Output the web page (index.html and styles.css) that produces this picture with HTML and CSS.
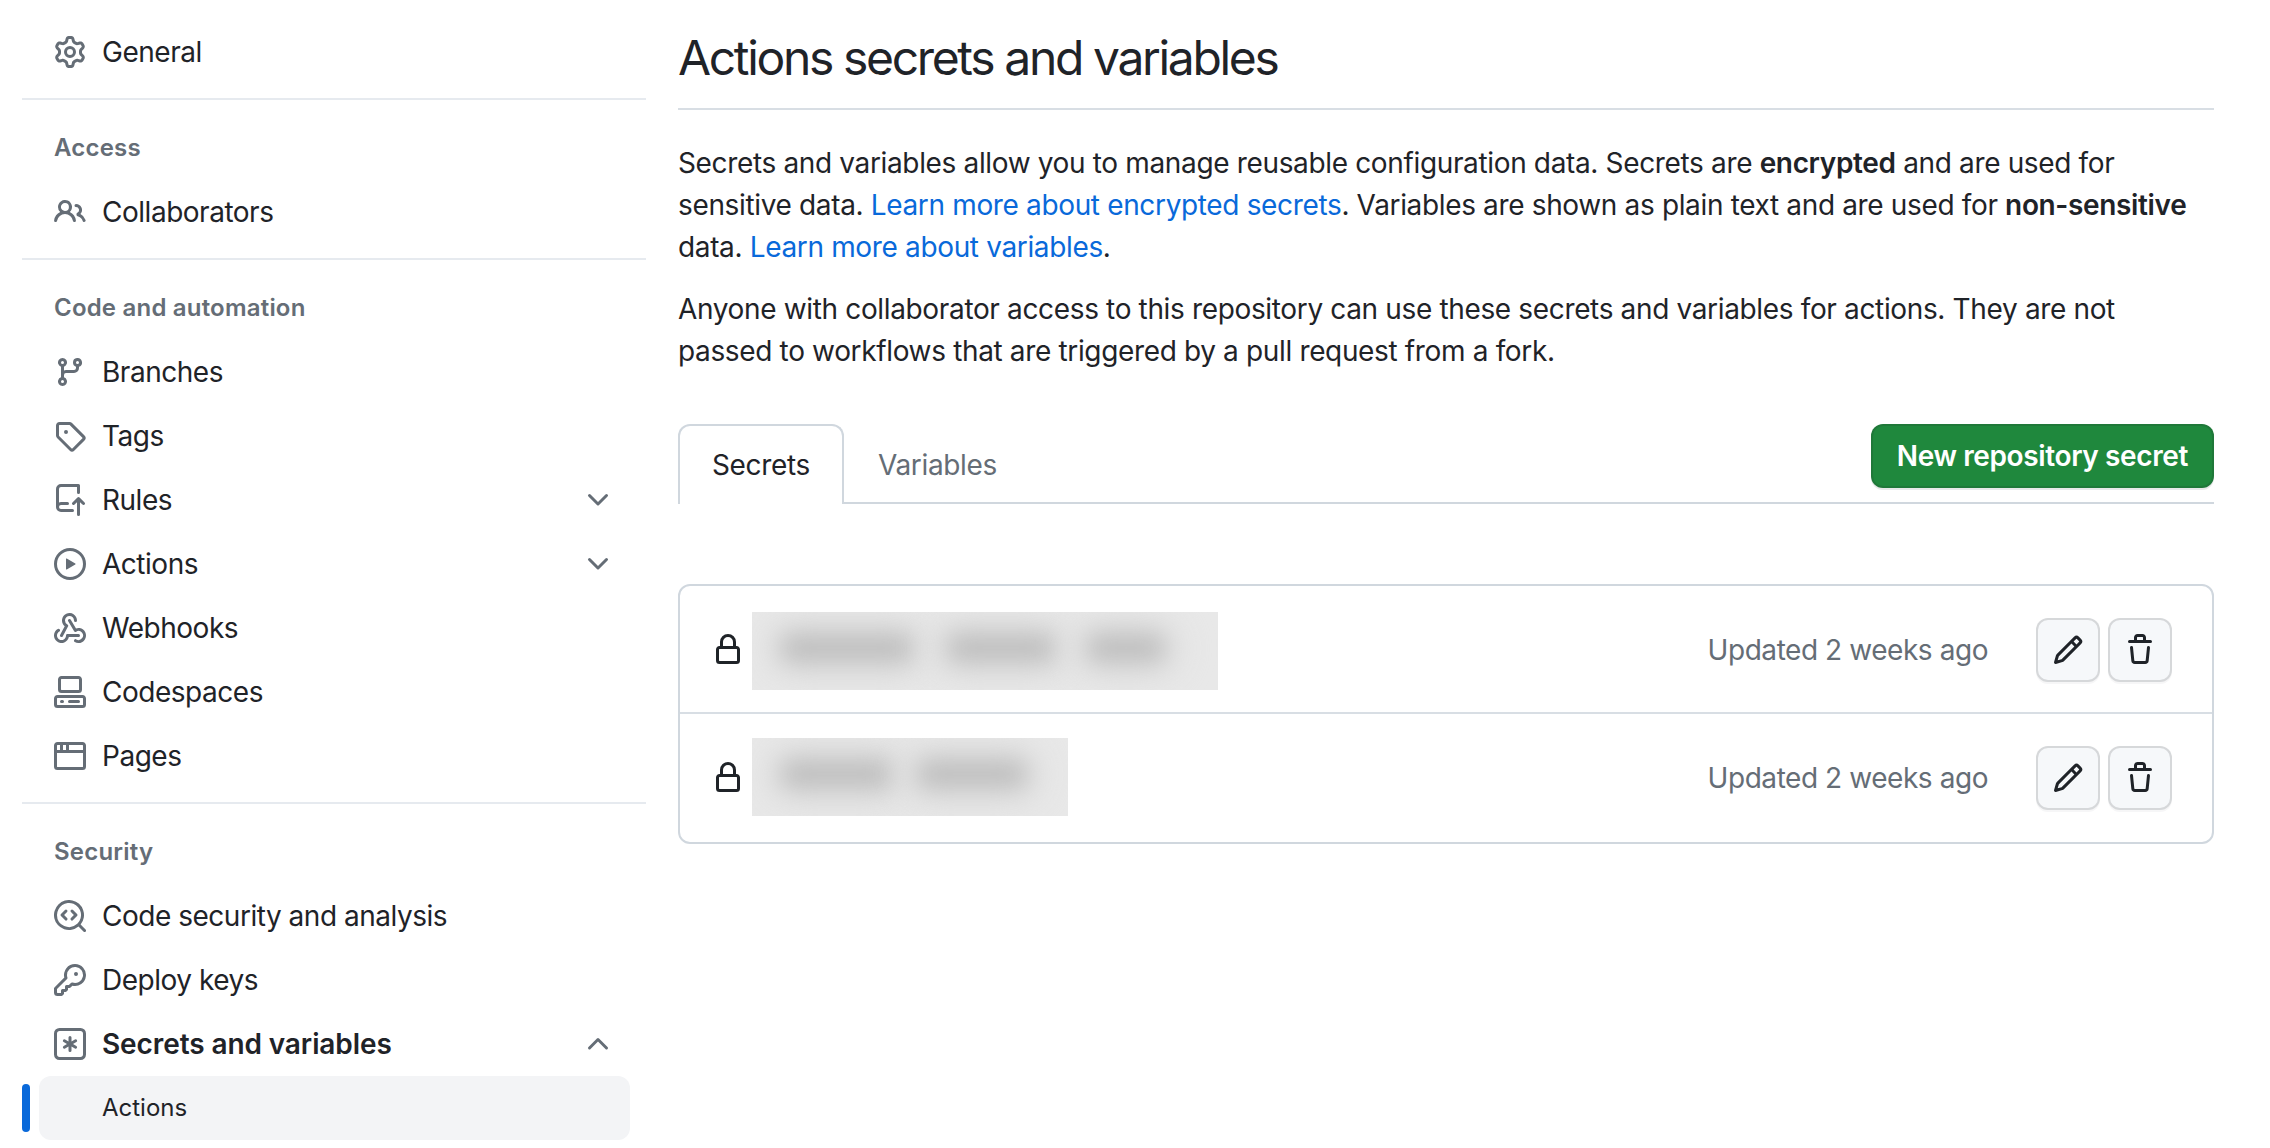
FILE: index.html
```html
<!DOCTYPE html>
<html lang="en">
<head>
<meta charset="utf-8">
<title>Actions secrets and variables</title>
<link rel="stylesheet" href="styles.css">
</head>
<body>
<svg class="sprite" width="0" height="0" aria-hidden="true">
<defs>
<symbol id="i-gear" viewBox="0 0 16 16"><path d="M8 0a8.2 8.2 0 0 1 .701.031C9.444.095 9.99.645 10.16 1.29l.288 1.107c.018.066.079.158.212.224.231.114.454.243.668.386.123.082.233.09.299.071l1.103-.303c.644-.176 1.392.021 1.82.63.27.385.506.792.704 1.218.315.675.111 1.422-.364 1.891l-.814.806c-.049.048-.098.147-.088.294.016.257.016.515 0 .772-.01.147.038.246.088.294l.814.806c.475.469.679 1.216.364 1.891a7.977 7.977 0 0 1-.704 1.217c-.428.61-1.176.807-1.82.63l-1.102-.302c-.067-.019-.177-.011-.3.071a5.909 5.909 0 0 1-.668.386c-.133.066-.194.158-.211.224l-.29 1.106c-.168.646-.715 1.196-1.458 1.26a8.006 8.006 0 0 1-1.402 0c-.743-.064-1.289-.614-1.458-1.26l-.289-1.106c-.018-.066-.079-.158-.212-.224a5.738 5.738 0 0 1-.668-.386c-.123-.082-.233-.09-.299-.071l-1.103.303c-.644.176-1.392-.021-1.82-.63a8.12 8.12 0 0 1-.704-1.218c-.315-.675-.111-1.422.363-1.891l.815-.806c.05-.048.098-.147.088-.294a6.214 6.214 0 0 1 0-.772c.01-.147-.038-.246-.088-.294l-.815-.806C.635 6.045.431 5.298.746 4.623a7.92 7.92 0 0 1 .704-1.217c.428-.61 1.176-.807 1.82-.63l1.102.302c.067.019.177.011.3-.071.214-.143.437-.272.668-.386.133-.066.194-.158.211-.224l.29-1.106C6.009.645 6.556.095 7.299.03 7.53.01 7.764 0 8 0Zm-.571 1.525c-.036.003-.108.036-.137.146l-.289 1.105c-.147.561-.549.967-.998 1.189-.173.086-.34.183-.5.29-.417.278-.97.423-1.529.27l-1.103-.303c-.109-.03-.175.016-.195.045-.22.312-.412.644-.573.99-.014.031-.021.11.059.19l.815.806c.411.406.562.957.53 1.456a4.709 4.709 0 0 0 0 .582c.032.499-.119 1.05-.53 1.456l-.815.806c-.081.08-.073.159-.059.19.162.346.353.677.573.989.02.03.085.076.195.046l1.102-.303c.56-.153 1.113-.008 1.53.27.161.107.328.204.501.29.447.222.85.629.997 1.189l.289 1.105c.029.109.101.143.137.146a6.6 6.6 0 0 0 1.142 0c.036-.003.108-.036.137-.146l.289-1.105c.147-.561.549-.967.998-1.189.173-.086.34-.183.5-.29.417-.278.97-.423 1.529-.27l1.103.303c.109.029.175-.016.195-.045.22-.313.411-.644.573-.99.014-.031.021-.11-.059-.19l-.815-.806c-.411-.406-.562-.957-.53-1.456a4.709 4.709 0 0 0 0-.582c-.032-.499.119-1.05.53-1.456l.815-.806c.081-.08.073-.159.059-.19a6.464 6.464 0 0 0-.573-.989c-.02-.03-.085-.076-.195-.046l-1.102.303c-.56.153-1.113.008-1.53-.27a4.44 4.44 0 0 0-.501-.29c-.447-.222-.85-.629-.997-1.189l-.289-1.105c-.029-.11-.101-.143-.137-.146a6.6 6.6 0 0 0-1.142 0ZM11 8a3 3 0 1 1-6 0 3 3 0 0 1 6 0ZM9.5 8a1.5 1.5 0 1 0-3.001.001A1.5 1.5 0 0 0 9.5 8Z"/></symbol>
<symbol id="i-people" viewBox="0 0 16 16"><path d="M2 5.5a3.5 3.5 0 1 1 5.898 2.549 5.508 5.508 0 0 1 3.034 4.084.75.75 0 1 1-1.482.235 4 4 0 0 0-7.9 0 .75.75 0 0 1-1.482-.236A5.507 5.507 0 0 1 3.102 8.05 3.493 3.493 0 0 1 2 5.5ZM11 4a3.001 3.001 0 0 1 2.22 5.018 5.01 5.01 0 0 1 2.56 3.012.749.749 0 0 1-.885.954.752.752 0 0 1-.549-.514 3.507 3.507 0 0 0-2.522-2.372.75.75 0 0 1-.574-.73v-.352a.75.75 0 0 1 .416-.672A1.5 1.5 0 0 0 11 5.5.75.75 0 0 1 11 4Zm-5.5-.5a2 2 0 1 0-.001 3.999A2 2 0 0 0 5.5 3.5Z"/></symbol>
<symbol id="i-branch" viewBox="0 0 16 16"><path d="M9.5 3.25a2.25 2.25 0 1 1 3 2.122V6A2.5 2.5 0 0 1 10 8.5H6a1 1 0 0 0-1 1v1.128a2.251 2.251 0 1 1-1.5 0V5.372a2.25 2.25 0 1 1 1.5 0v1.836A2.493 2.493 0 0 1 6 7h4a1 1 0 0 0 1-1v-.628A2.25 2.25 0 0 1 9.5 3.25Zm-6 0a.75.75 0 1 0 1.5 0 .75.75 0 0 0-1.5 0Zm8.25-.75a.75.75 0 1 0 0 1.5.75.75 0 0 0 0-1.5ZM4.25 12a.75.75 0 1 0 0 1.5.75.75 0 0 0 0-1.5Z"/></symbol>
<symbol id="i-tag" viewBox="0 0 16 16"><path d="M1 7.775V2.75C1 1.784 1.784 1 2.75 1h5.025c.464 0 .91.184 1.238.513l6.25 6.25a1.75 1.75 0 0 1 0 2.474l-5.026 5.026a1.75 1.75 0 0 1-2.474 0l-6.25-6.25A1.752 1.752 0 0 1 1 7.775Zm1.5 0c0 .066.026.13.073.177l6.25 6.25a.25.25 0 0 0 .354 0l5.025-5.025a.25.25 0 0 0 0-.354l-6.25-6.25a.25.25 0 0 0-.177-.073H2.75a.25.25 0 0 0-.25.25ZM6 5a1 1 0 1 1 0 2 1 1 0 0 1 0-2Z"/></symbol>
<symbol id="i-rules" viewBox="0 0 16 16"><path d="M1 2.5A2.5 2.5 0 0 1 3.5 0h8.75a.75.75 0 0 1 .75.75v3.5a.75.75 0 0 1-1.5 0V1.5h-8a1 1 0 0 0-1 1v6.708A2.493 2.493 0 0 1 3.5 9h3.25a.75.75 0 0 1 0 1.5H3.5a1 1 0 0 0 0 2h5.75a.75.75 0 0 1 0 1.5H3.5A2.5 2.5 0 0 1 1 11.5Zm13.23 7.79h-.001l-1.224-1.224v6.184a.75.75 0 0 1-1.5 0V9.066L10.28 10.29a.75.75 0 0 1-1.06-1.061l2.505-2.504a.75.75 0 0 1 1.06 0L15.29 9.23a.751.751 0 0 1-.018 1.042.751.751 0 0 1-1.042.018Z"/></symbol>
<symbol id="i-play" viewBox="0 0 16 16"><path d="M8 0a8 8 0 1 1 0 16A8 8 0 0 1 8 0ZM1.5 8a6.5 6.5 0 1 0 13 0 6.5 6.5 0 0 0-13 0Zm4.879-2.773 4.264 2.559a.25.25 0 0 1 0 .428l-4.264 2.559A.25.25 0 0 1 6 10.559V5.442a.25.25 0 0 1 .379-.215Z"/></symbol>
<symbol id="i-webhook" viewBox="0 0 16 16"><path d="M5.5 4.25a2.25 2.25 0 0 1 4.5 0 .75.75 0 0 0 1.5 0 3.75 3.75 0 1 0-6.14 2.889l-2.272 4.258a.75.75 0 0 0 1.324.706L7 7.25a.75.75 0 0 0-.307-1.015A2.25 2.25 0 0 1 5.5 4.25Z"/><path d="M7.364 3.607a.75.75 0 0 1 1.03.257l2.608 4.349a3.75 3.75 0 1 1-.628 6.785.75.75 0 0 1 .752-1.299 2.25 2.25 0 1 0-.033-3.88.75.75 0 0 1-1.03-.256L7.107 4.636a.75.75 0 0 1 .257-1.03Z"/><path d="M2.9 8.776A.75.75 0 0 1 2.625 9.8 2.25 2.25 0 1 0 6 11.75a.75.75 0 0 1 .75-.751h5.5a.75.75 0 0 1 0 1.5H7.425a3.751 3.751 0 1 1-5.55-3.998.75.75 0 0 1 1.024.274Z"/></symbol>
<symbol id="i-codespaces" viewBox="0 0 16 16"><path d="M0 11.25c0-.966.784-1.75 1.75-1.75h12.5c.966 0 1.75.784 1.75 1.75v3A1.75 1.75 0 0 1 14.25 16H1.75A1.75 1.75 0 0 1 0 14.25Zm2-9.5C2 .784 2.784 0 3.75 0h8.5C13.216 0 14 .784 14 1.75v5a1.75 1.75 0 0 1-1.75 1.75h-8.5A1.75 1.75 0 0 1 2 6.75Zm1.75-.25a.25.25 0 0 0-.25.25v5c0 .138.112.25.25.25h8.5a.25.25 0 0 0 .25-.25v-5a.25.25 0 0 0-.25-.25Zm-2 9.5a.25.25 0 0 0-.25.25v3c0 .138.112.25.25.25h12.5a.25.25 0 0 0 .25-.25v-3a.25.25 0 0 0-.25-.25Z"/><path d="M7 12.75a.75.75 0 0 1 .75-.75h4.5a.75.75 0 0 1 0 1.5h-4.5a.75.75 0 0 1-.75-.75Zm-4 0a.75.75 0 0 1 .75-.75h.5a.75.75 0 0 1 0 1.5h-.5a.75.75 0 0 1-.75-.75Z"/></symbol>
<symbol id="i-browser" viewBox="0 0 16 16"><path fill-rule="evenodd" d="M0 2.75C0 1.784.784 1 1.75 1h12.5c.966 0 1.75.784 1.75 1.75v10.5A1.75 1.75 0 0 1 14.25 15H1.75A1.75 1.75 0 0 1 0 13.25ZM1.5 6.5h13v6.75a.25.25 0 0 1-.25.25H1.75a.25.25 0 0 1-.25-.25ZM1.5 2.75a.25.25 0 0 1 .25-.25H3V5H1.5ZM4.5 2.5H6V5H4.5ZM7.5 2.5h6.75a.25.25 0 0 1 .25.25V5H7.5Z"/></symbol>
<symbol id="i-codescan" viewBox="0 0 16 16"><path d="M8.47 4.97a.75.75 0 0 0 0 1.06L9.94 7.5 8.47 8.97a.75.75 0 1 0 1.06 1.06l2-2a.75.75 0 0 0 0-1.06l-2-2a.75.75 0 0 0-1.06 0ZM6.53 6.03a.75.75 0 0 0-1.06-1.06l-2 2a.75.75 0 0 0 0 1.06l2 2a.75.75 0 1 0 1.06-1.06L5.06 7.5l1.47-1.47Z"/><path d="M12.246 13.307a7.501 7.501 0 1 1 1.06-1.06l2.474 2.473a.749.749 0 0 1-.326 1.275.749.749 0 0 1-.734-.215ZM1.5 7.5a6.002 6.002 0 0 0 3.608 5.504 6.002 6.002 0 0 0 6.486-1.117.748.748 0 0 1 .292-.293A6 6 0 1 0 1.5 7.5Z"/></symbol>
<symbol id="i-key" viewBox="0 0 16 16"><path d="M10.5 0a5.499 5.499 0 1 1-1.288 10.848l-.932.932a.749.749 0 0 1-.53.22H7v.75a.749.749 0 0 1-.22.53l-.5.5a.749.749 0 0 1-.53.22H5v.75a.749.749 0 0 1-.22.53l-.5.5a.749.749 0 0 1-.53.22h-2A1.75 1.75 0 0 1 0 14.25v-2c0-.199.079-.389.22-.53l4.932-4.932A5.5 5.5 0 0 1 10.5 0Zm-4 5.5c-.001.431.069.86.205 1.269a.75.75 0 0 1-.181.768L1.5 12.56v1.69c0 .138.112.25.25.25h1.69l.06-.06v-1.19a.75.75 0 0 1 .75-.75h1.19l.06-.06v-1.19a.75.75 0 0 1 .75-.75h1.19l1.023-1.025a.75.75 0 0 1 .768-.18A4 4 0 1 0 6.5 5.5ZM11 6a1 1 0 1 1 0-2 1 1 0 0 1 0 2Z"/></symbol>
<symbol id="i-asterisk" viewBox="0 0 16 16"><path d="M0 2.75A2.75 2.75 0 0 1 2.75 0h10.5A2.75 2.75 0 0 1 16 2.75v10.5A2.75 2.75 0 0 1 13.25 16H2.75A2.75 2.75 0 0 1 0 13.25ZM2.75 1.5c-.69 0-1.25.56-1.25 1.25v10.5c0 .69.56 1.25 1.25 1.25h10.5c.69 0 1.25-.56 1.25-1.25V2.75c0-.69-.56-1.25-1.25-1.25Z"/><path d="M8 4a.75.75 0 0 1 .75.75V6.7l1.69-.975a.75.75 0 0 1 .75 1.3L9.5 8l1.69.976a.75.75 0 0 1-.75 1.298L8.75 9.3v1.951a.75.75 0 0 1-1.5 0V9.299l-1.69.976a.75.75 0 0 1-.75-1.3L6.5 8l-1.69-.975a.75.75 0 0 1 .75-1.3l1.69.976V4.75A.75.75 0 0 1 8 4Z"/></symbol>
<symbol id="i-down" viewBox="0 0 16 16"><path d="M12.78 5.22a.749.749 0 0 1 0 1.06l-4.25 4.25a.749.749 0 0 1-1.06 0L3.22 6.28a.749.749 0 1 1 1.06-1.06L8 8.939l3.72-3.719a.749.749 0 0 1 1.06 0Z"/></symbol>
<symbol id="i-up" viewBox="0 0 16 16"><path d="M3.22 10.53a.749.749 0 0 1 0-1.06l4.25-4.25a.749.749 0 0 1 1.06 0l4.25 4.25a.749.749 0 1 1-1.06 1.06L8 6.811 4.28 10.53a.749.749 0 0 1-1.06 0Z"/></symbol>
<symbol id="i-lock" viewBox="0 0 16 16"><path d="M4 4a4 4 0 0 1 8 0v2h.25c.966 0 1.75.784 1.75 1.75v5.5A1.75 1.75 0 0 1 12.25 15h-8.5A1.75 1.75 0 0 1 2 13.25v-5.5C2 6.784 2.784 6 3.75 6H4Zm8.25 3.5h-8.5a.25.25 0 0 0-.25.25v5.5c0 .138.112.25.25.25h8.5a.25.25 0 0 0 .25-.25v-5.5a.25.25 0 0 0-.25-.25ZM10.5 6V4a2.5 2.5 0 1 0-5 0v2Z"/></symbol>
<symbol id="i-pencil" viewBox="0 0 16 16"><path d="M11.013 1.427a1.75 1.75 0 0 1 2.474 0l1.086 1.086a1.75 1.75 0 0 1 0 2.474l-8.61 8.61c-.21.21-.47.364-.756.445l-3.251.93a.75.75 0 0 1-.927-.928l.929-3.25c.081-.286.235-.547.445-.758l8.61-8.61Zm.176 4.823L9.75 4.81l-6.286 6.287a.253.253 0 0 0-.064.108l-.558 1.953 1.953-.558a.253.253 0 0 0 .108-.064Zm1.238-3.763a.25.25 0 0 0-.354 0L10.811 3.75l1.439 1.44 1.263-1.263a.25.25 0 0 0 0-.354Z"/></symbol>
<symbol id="i-trash" viewBox="0 0 16 16"><path d="M11 1.75V3h2.25a.75.75 0 0 1 0 1.5H2.75a.75.75 0 0 1 0-1.5H5V1.75C5 .784 5.784 0 6.75 0h2.5C10.216 0 11 .784 11 1.75ZM4.496 6.675l.66 6.6a.25.25 0 0 0 .249.225h5.19a.25.25 0 0 0 .249-.225l.66-6.6a.75.75 0 0 1 1.492.149l-.66 6.6A1.748 1.748 0 0 1 10.595 15h-5.19a1.75 1.75 0 0 1-1.741-1.575l-.66-6.6a.75.75 0 1 1 1.492-.15ZM6.5 1.75V3h3V1.75a.25.25 0 0 0-.25-.25h-2.5a.25.25 0 0 0-.25.25Z"/></symbol>
</defs>
</svg>
<div class="layout">
<nav class="sidebar">
  <a class="row"><svg class="icon"><use href="#i-gear"/></svg><span>General</span></a>
  <hr class="sep">
  <h2 class="group">Access</h2>
  <a class="row"><svg class="icon"><use href="#i-people"/></svg><span>Collaborators</span></a>
  <hr class="sep">
  <h2 class="group">Code and automation</h2>
  <a class="row"><svg class="icon"><use href="#i-branch"/></svg><span>Branches</span></a>
  <a class="row"><svg class="icon"><use href="#i-tag"/></svg><span>Tags</span></a>
  <a class="row"><svg class="icon"><use href="#i-rules"/></svg><span>Rules</span><svg class="chev"><use href="#i-down"/></svg></a>
  <a class="row"><svg class="icon"><use href="#i-play"/></svg><span>Actions</span><svg class="chev"><use href="#i-down"/></svg></a>
  <a class="row"><svg class="icon"><use href="#i-webhook"/></svg><span>Webhooks</span></a>
  <a class="row"><svg class="icon"><use href="#i-codespaces"/></svg><span>Codespaces</span></a>
  <a class="row"><svg class="icon"><use href="#i-browser"/></svg><span>Pages</span></a>
  <hr class="sep">
  <h2 class="group">Security</h2>
  <a class="row"><svg class="icon"><use href="#i-codescan"/></svg><span>Code security and analysis</span></a>
  <a class="row"><svg class="icon"><use href="#i-key"/></svg><span>Deploy keys</span></a>
  <a class="row row-open"><svg class="icon"><use href="#i-asterisk"/></svg><span>Secrets and variables</span><svg class="chev"><use href="#i-up"/></svg></a>
  <div class="subrow"><i class="marker"></i><a class="subitem">Actions</a></div>
</nav>
<main class="content">
  <h1 class="title">Actions secrets and variables</h1>
  <p class="para first">Secrets and variables allow you to manage reusable configuration data. Secrets are <b>encrypted</b> and are used for sensitive data. <a class="link">Learn more about encrypted secrets</a>. Variables are shown as plain text and are used for <b class="nowrap">non-sensitive</b> data. <a class="link">Learn more about variables</a>.</p>
  <p class="para">Anyone with collaborator access to this repository can use these secrets and variables for actions. They are not passed to workflows that are triggered by a pull request from a fork.</p>
  <div class="tabbar">
    <a class="tab tab-on">Secrets</a>
    <a class="tab">Variables</a>
    <button class="primary">New repository secret</button>
  </div>
  <section class="box">
    <div class="item item-a">
      <svg class="lock"><use href="#i-lock"/></svg>
      <div class="redact wide"><i class="smear s1"></i><i class="smear s2"></i><i class="smear s3"></i></div>
      <span class="when">Updated 2 weeks ago</span>
      <button class="tool"><svg class="tool-ic"><use href="#i-pencil"/></svg></button>
      <button class="tool"><svg class="tool-ic"><use href="#i-trash"/></svg></button>
    </div>
    <div class="item item-b">
      <svg class="lock"><use href="#i-lock"/></svg>
      <div class="redact narrow"><i class="smear s4"></i><i class="smear s5"></i></div>
      <span class="when">Updated 2 weeks ago</span>
      <button class="tool"><svg class="tool-ic"><use href="#i-pencil"/></svg></button>
      <button class="tool"><svg class="tool-ic"><use href="#i-trash"/></svg></button>
    </div>
  </section>
</main>
</div>
</body>
</html>
```

FILE: styles.css
```css
* { box-sizing: border-box; }
html, body { margin: 0; height: 100%; background: #fff; }
body { color: #1f2328; font-family: Inter, "Liberation Sans", sans-serif; font-size: 28px; line-height: 42px; letter-spacing: -0.35px; overflow: hidden; }
.sprite { position: absolute; }
.layout { display: flex; gap: 32px; padding: 20px 56px 0 22px; }
.sidebar { width: 624px; flex: none; letter-spacing: -0.48px; }
.row { display: flex; align-items: center; gap: 16px; height: 64px; padding: 0 32px; }
.row span { flex: 1; }
.icon { width: 32px; height: 32px; fill: #656d76; flex: none; }
.chev { width: 32px; height: 32px; fill: #656d76; flex: none; }
.row-open { font-weight: 600; letter-spacing: -0.1px; }
.sep { height: 2px; border: 0; margin: 14px 0 0; background: #e6eaef; }
.group { margin: 0; padding: 28px 32px 12px; font-size: 24px; line-height: 40px; font-weight: 600; letter-spacing: 0.2px; color: #656d76; }
.subrow { display: flex; align-items: center; gap: 9px; height: 64px; }
.marker { width: 8px; height: 48px; border-radius: 4px; background: #0969da; flex: none; }
.subitem { display: block; width: 591px; height: 64px; padding-left: 63px; border-radius: 12px; background: #f3f4f6; font-size: 24px; line-height: 64px; letter-spacing: 0; }
.content { flex: 1; min-width: 0; padding-top: 2px; }
.title { margin: 0; padding-bottom: 14px; border-bottom: 2px solid #d8dee4; font-size: 48px; line-height: 72px; font-weight: 400; letter-spacing: -2.35px; }
.para { margin: 20px 0 0; max-width: 1525px; }
.para.first { margin-top: 32px; }
.para b { font-weight: 600; }
.nowrap { white-space: nowrap; }
.link { color: #0969da; }
.tabbar { display: flex; align-items: flex-start; height: 80px; margin-top: 52px; border-bottom: 2px solid #d0d7de; }
.tab { height: 80px; padding: 0 32px; border: 2px solid transparent; border-bottom: 0; border-radius: 12px 12px 0 0; line-height: 78px; color: #656d76; }
.tab-on { border-color: #d0d7de; background: #fff; color: #1f2328; }
.primary { margin-left: auto; height: 64px; padding: 0 24px; border: 2px solid rgba(31,35,40,.15); border-radius: 12px; background: #1f883d; box-shadow: 0 2px 0 rgba(31,35,40,.1); color: #fff; font: 600 28px Inter, "Liberation Sans", sans-serif; letter-spacing: -0.38px; }
.box { margin-top: 80px; border: 2px solid #d0d7de; border-radius: 12px; }
.item { display: flex; align-items: center; padding: 0 40px 0 32px; }
.item-a { height: 126px; padding-top: 2px; }
.item-b { height: 130px; border-top: 2px solid #d8dee4; }
.lock { width: 32px; height: 32px; fill: #1f2328; flex: none; margin-right: 8px; }
.redact { display: flex; align-items: center; height: 78px; padding: 0 0 6px 30px; background: #e8e8e8; overflow: hidden; }
.wide { width: 466px; margin-top: 2px; }
.narrow { width: 316px; margin-top: -2px; }
.smear { display: block; flex: none; height: 28px; border-radius: 12px; background: #c0c0c0; box-shadow: 0 0 22px 14px #dadada; filter: blur(11px); }
.s1 { width: 130px; }
.s2 { width: 106px; margin-left: 36px; }
.s3 { width: 76px; margin-left: 34px; }
.s4 { width: 110px; }
.s5 { width: 108px; margin-left: 26px; }
.when { margin-left: auto; margin-right: 48px; color: #656d76; letter-spacing: -0.44px; }
.tool { display: flex; align-items: center; justify-content: center; width: 64px; height: 64px; padding: 0; border: 2px solid rgba(31,35,40,.15); border-radius: 12px; background: #f6f8fa; box-shadow: 0 2px 0 rgba(31,35,40,.04); }
.tool + .tool { margin-left: 8px; }
.tool-ic { width: 32px; height: 32px; fill: #1f2328; }
```
